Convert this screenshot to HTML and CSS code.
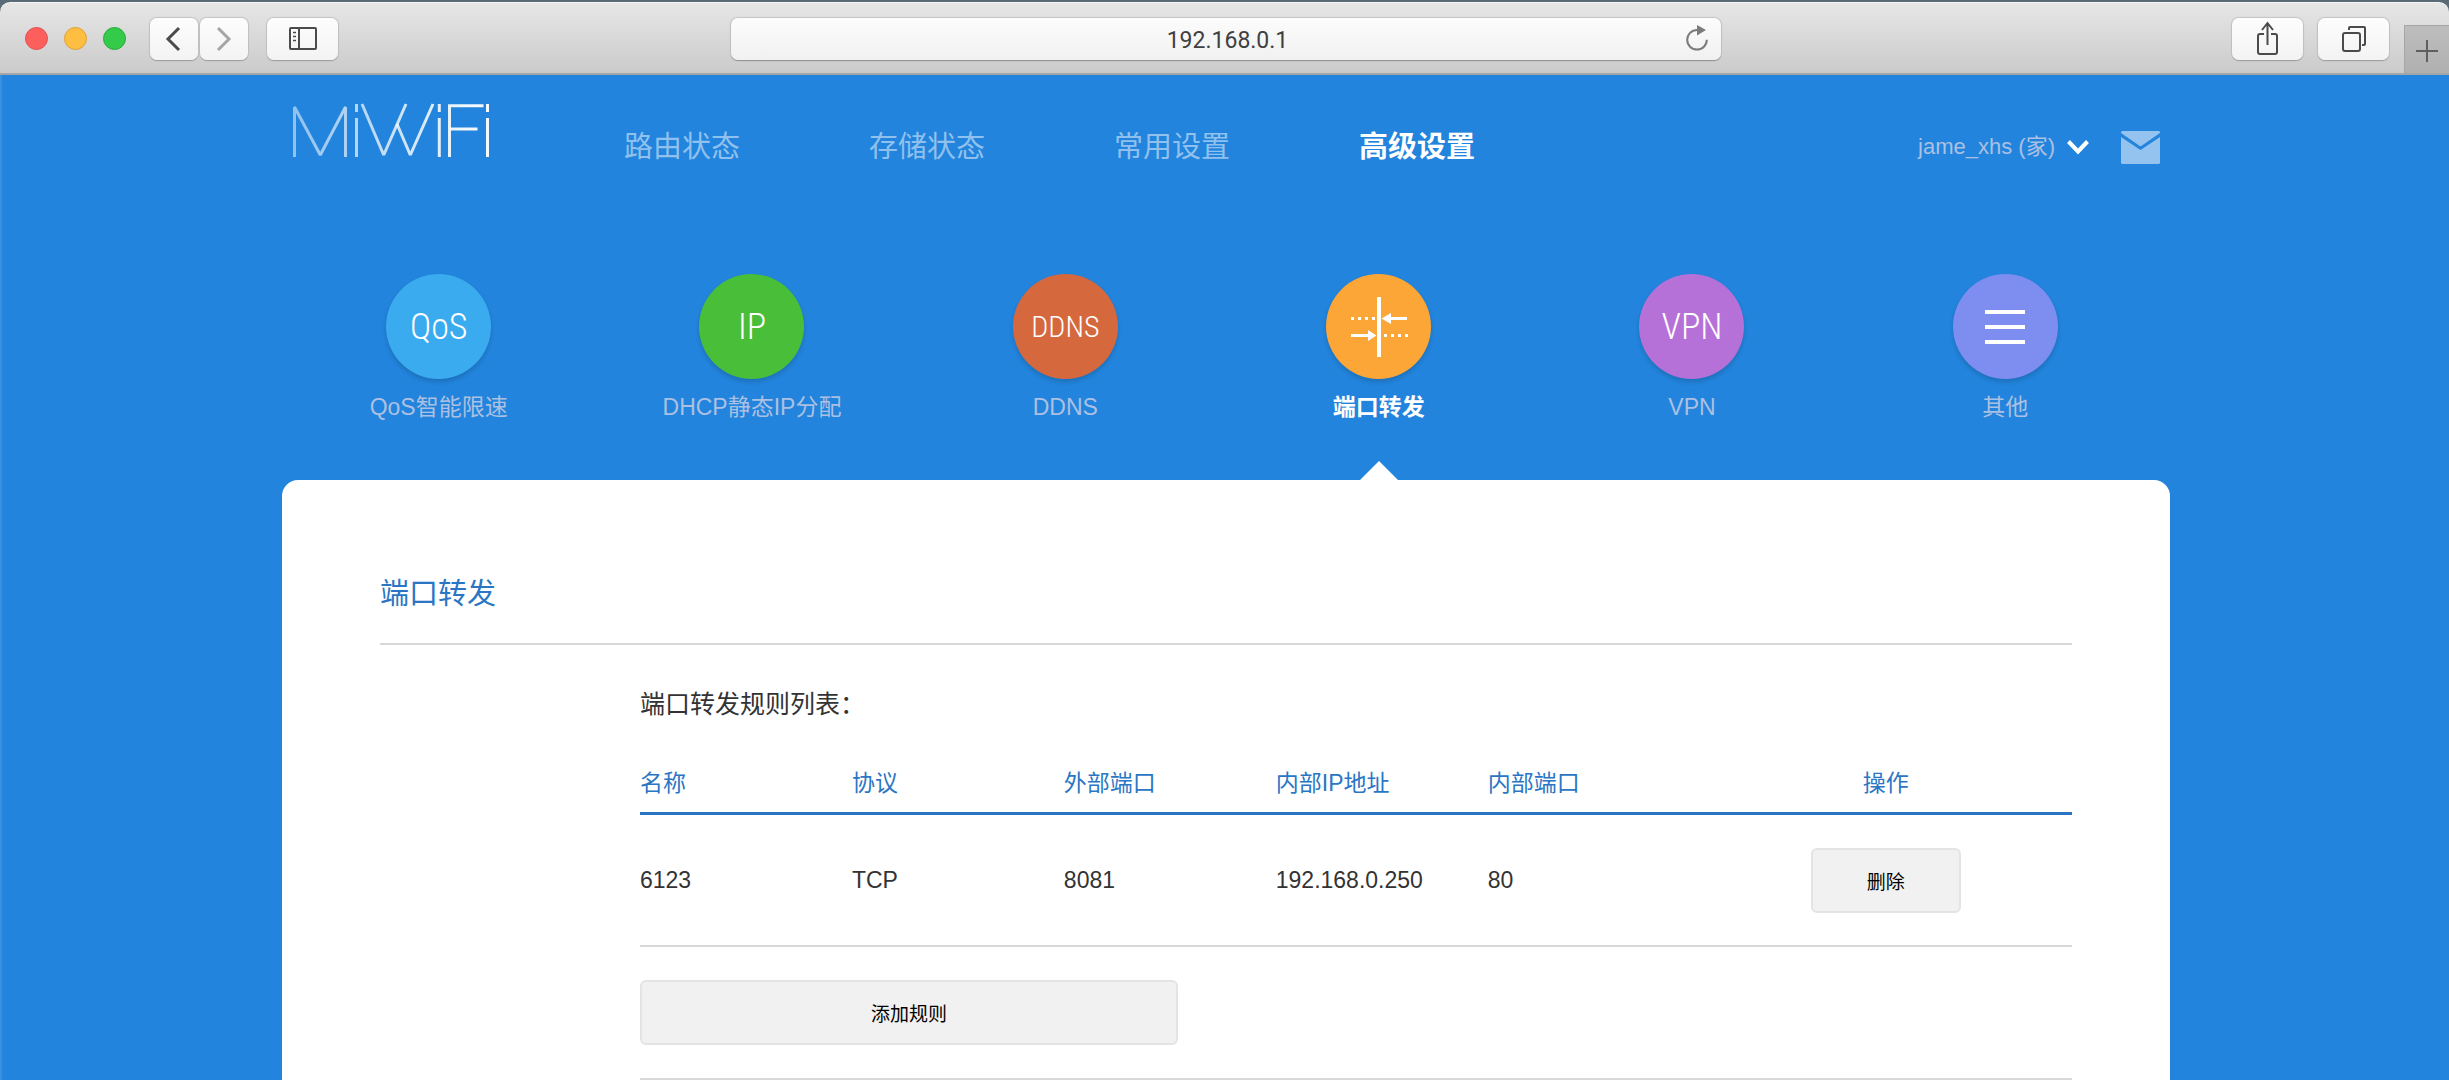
FILE: index.html
```html
<!DOCTYPE html>
<html lang="zh-CN">
<head>
<meta charset="utf-8">
<title>MiWiFi - 端口转发</title>
<link rel="stylesheet" href="styles.css">
</head>
<body>
<div class="desktop">
<div class="toolbar">
  <div class="toolbar-left">
    <div class="lights">
      <span class="light light-red"></span>
      <span class="light light-yellow"></span>
      <span class="light light-green"></span>
    </div>
    <div class="history">
      <button class="tool tool-small" type="button" aria-label="后退">
        <svg width="48" height="42" viewBox="0 0 48 42"><path d="M29 10 18 21l11 11" fill="none" stroke="#4b4b4b" stroke-width="3"/></svg>
      </button>
      <button class="tool tool-small" type="button" aria-label="前进">
        <svg width="48" height="42" viewBox="0 0 48 42"><path d="M18 10l11 11-11 11" fill="none" stroke="#a6a6a6" stroke-width="3"/></svg>
      </button>
    </div>
    <button class="tool" type="button" aria-label="边栏">
      <svg width="28" height="24" viewBox="0 0 28 24"><rect x="1" y="1" width="26" height="21" rx="1" fill="none" stroke="#4b4b4b" stroke-width="2"/><path d="M10 1v21" stroke="#4b4b4b" stroke-width="2"/><path d="M4 5.500h3M4 9.500h3M4 13.500h3" stroke="#4b4b4b" stroke-width="1.500"/></svg>
    </button>
  </div>
  <div class="address">
    <input class="address-input" type="text" value="192.168.0.1" aria-label="地址">
    <button class="reload" type="button" aria-label="重新载入">
      <svg width="24" height="28" viewBox="0 0 24 28"><path d="M12 6A9.800 9.800 0 1 0 21.800 15.800" fill="none" stroke="#7b7b7b" stroke-width="2"/><path d="M12 1l9 5-9 5.500z" fill="#7b7b7b"/></svg>
    </button>
  </div>
  <div class="toolbar-right">
    <button class="tool" type="button" aria-label="共享">
      <svg width="24" height="36" viewBox="0 0 24 36"><path d="M8 13H4a2 2 0 0 0-2 2v16a2 2 0 0 0 2 2h15a2 2 0 0 0 2-2V15a2 2 0 0 0-2-2h-4M11.500 24V2M6 9l5.500-7L17 9" fill="none" stroke="#4b4b4b" stroke-width="2"/></svg>
    </button>
    <button class="tool" type="button" aria-label="标签页概览">
      <svg width="26" height="28" viewBox="0 0 26 28"><rect x="2" y="8" width="17" height="18" rx="2" fill="none" stroke="#4b4b4b" stroke-width="2"/><path d="M8 5V3a1 1 0 0 1 1-1h14a1 1 0 0 1 1 1v16a1 1 0 0 1-1 1h-2" fill="none" stroke="#4b4b4b" stroke-width="2"/></svg>
    </button>
    <button class="new-tab" type="button" aria-label="新标签页">
      <svg width="22" height="22" viewBox="0 0 22 22"><path d="M11 0v22M0 11h22" stroke="#5f5f5f" stroke-width="2"/></svg>
    </button>
  </div>
</div>

<div class="page">
  <div class="container">
    <header class="header">
      <a class="logo" href="#" aria-label="MiWiFi">
        <svg width="200" height="56" viewBox="292 103 200 56" fill="none" stroke="url(#fade)" stroke-width="3">
          <defs>
            <linearGradient id="fade" gradientUnits="userSpaceOnUse" x1="293" y1="0" x2="470" y2="0">
              <stop offset="0" stop-color="#fff" stop-opacity=".5"/>
              <stop offset="1" stop-color="#fff" stop-opacity=".95"/>
            </linearGradient>
          </defs>
          <polyline points="294.500,157 294.500,107 320.300,155 345.500,107 345.500,157" stroke-linejoin="bevel"/>
          <path d="M356.500 104v8M356.500 118v39M439.300 104v8M439.300 118v39M487.500 104v8M487.500 118v39"/>
          <polyline points="362,104 383.700,155 406,104" stroke-linejoin="bevel"/>
          <polyline points="397,124 410.300,155 433,104" stroke-linejoin="bevel"/>
          <polyline points="483.500,105.800 449.500,105.800 449.500,157"/>
          <line x1="450" y1="129" x2="477.500" y2="129"/>
        </svg>
      </a>
      <nav class="main-nav">
        <a href="#">路由状态</a>
        <a href="#">存储状态</a>
        <a href="#">常用设置</a>
        <a class="current" href="#">高级设置</a>
      </nav>
      <div class="account">
        <a class="user" href="#">jame_xhs (家)
          <svg width="22" height="16" viewBox="0 0 22 16"><path d="M1.500 2.500 11 12.500l9.500-10" fill="none" stroke="#fff" stroke-width="4"/></svg>
        </a>
        <a class="mail" href="#" aria-label="消息">
          <svg width="39" height="33" viewBox="0 0 39 33"><path d="M1 0h37l1 1v1L19.500 15.500 0 2V1z" fill="#94c3f0"/><path d="M0 6l19.500 13L39 6v26l-1 1H1l-1-1z" fill="#94c3f0"/></svg>
        </a>
      </div>
    </header>

    <nav class="features">
      <a class="feature" href="#"><span class="disc disc-qos">QoS</span><span>QoS智能限速</span></a>
      <a class="feature" href="#"><span class="disc disc-ip">IP</span><span>DHCP静态IP分配</span></a>
      <a class="feature" href="#"><span class="disc disc-ddns">DDNS</span><span>DDNS</span></a>
      <a class="feature feature-current" href="#"><span class="disc disc-port">
        <svg width="58" height="60" viewBox="0 0 58 60" fill="none" stroke="#fff" stroke-width="3"><path d="M29 0v60" stroke-width="4"/><path d="M1 21.500h24" stroke-dasharray="3 4"/><path d="M34 38.500h24" stroke-dasharray="3 4"/><path d="M39 21.500h18M1 38.500h18"/><path d="M31.500 21.500 41 16v11zM26.500 38.500 18 33v11z" fill="#fff" stroke="none"/></svg>
      </span><span>端口转发</span></a>
      <a class="feature" href="#"><span class="disc disc-vpn">VPN</span><span>VPN</span></a>
      <a class="feature" href="#"><span class="disc disc-more">
        <svg width="40" height="34" viewBox="0 0 40 34"><path d="M0 2h40M0 17h40M0 32h40" stroke="#fff" stroke-width="4"/></svg>
      </span><span>其他</span></a>
    </nav>

    <main class="panel">
      <h1 class="panel-title">端口转发</h1>
      <section class="rules">
        <h2 class="rules-title">端口转发规则列表：</h2>
        <table class="rules-table">
          <thead>
            <tr><th>名称</th><th>协议</th><th>外部端口</th><th>内部IP地址</th><th>内部端口</th><th class="action">操作</th></tr>
          </thead>
          <tbody>
            <tr><td>6123</td><td>TCP</td><td>8081</td><td>192.168.0.250</td><td>80</td><td class="action"><button class="btn btn-delete" type="button">删除</button></td></tr>
          </tbody>
        </table>
        <div class="add-row">
          <button class="btn btn-add" type="button">添加规则</button>
        </div>
      </section>
    </main>
  </div>
</div>
</div>
</body>
</html>
```
FILE: styles.css
```css
* {
  box-sizing: border-box;
}

body {
  margin: 0;
  font-family: "Liberation Sans", "Noto Sans CJK SC", sans-serif;
  font-size: 23px;
  color: #333;
}

a {
  color: inherit;
  text-decoration: none;
}

button,
input {
  font: inherit;
}

svg {
  display: block;
}

.desktop {
  display: flex;
  flex-direction: column;
  min-height: 100vh;
  padding-top: 2px;
  background: #5b6b76;
}

/* Browser toolbar */
.toolbar {
  display: grid;
  grid-template-columns: 1fr minmax(0, 990px) 1fr;
  height: 73px;
  padding-left: 3px;
  border-top: 1px solid #f6f6f6;
  border-bottom: 2px solid #a5a5a5;
  border-radius: 10px 10px 0 0;
  background: linear-gradient(#e6e6e6, #cbcbcb);
}

.toolbar-left,
.toolbar-right {
  display: flex;
  align-items: flex-start;
  padding-top: 15px;
}

.toolbar-left {
  padding-left: 22px;
}

.toolbar-right {
  justify-content: flex-end;
  gap: 15px;
}

.lights {
  display: flex;
  gap: 16px;
  margin: 9px 24px 0 0;
}

.light {
  width: 23px;
  height: 23px;
  border: 1px solid;
  border-radius: 50%;
}

.light-red {
  background: #fd605c;
  border-color: #e5504c;
}

.light-yellow {
  background: #fdbe41;
  border-color: #e0a135;
}

.light-green {
  background: #34cb4b;
  border-color: #27ab38;
}

.history {
  display: flex;
  gap: 2px;
  margin-right: 19px;
}

.tool {
  display: flex;
  align-items: center;
  justify-content: center;
  width: 71px;
  height: 42px;
  padding: 0;
  border: 0;
  border-radius: 7px;
  background: linear-gradient(#fdfdfd, #f3f3f3);
  box-shadow: 0 1px 1px #9c9c9c, 0 0 1px 1px #c4c4c4;
}

.tool-small {
  width: 48px;
}

.address {
  display: flex;
  position: relative;
  height: 42px;
  margin-top: 15px;
}

.address-input {
  width: 100%;
  padding: 2px 38px 0 41px;
  border: 0;
  border-radius: 7px;
  background: linear-gradient(#fcfcfc, #f1f1f1);
  box-shadow: 0 1px 1px #909090, 0 0 1px 1px #c4c4c4;
  color: #404040;
  font-family: Roboto, "Liberation Sans", sans-serif;
  text-align: center;
}

.reload {
  position: absolute;
  right: 12px;
  top: 6px;
  padding: 0;
  border: 0;
  background: none;
}

.new-tab {
  display: flex;
  align-items: center;
  justify-content: center;
  align-self: flex-end;
  width: 45px;
  height: 48px;
  padding: 2px 0 0;
  border: 0;
  border-top: 1px solid #a6a6a6;
  border-left: 1px solid #a6a6a6;
  background: linear-gradient(#bdbdbd, #b0b0b0);
}

/* Router admin page */
.page {
  display: flex;
  flex: 1;
  padding: 0 0 0 1px;
  border-left: 2px solid #3990df;
  background: #2284dc;
}

.container {
  display: flex;
  flex-direction: column;
  width: 100%;
  max-width: 1888px;
  margin: 0 auto;
}

.header {
  display: flex;
  align-items: center;
  height: 140px;
  padding: 0 10px;
}

.logo {
  align-self: flex-start;
  margin: 28px 132px 0 0;
}

.main-nav {
  display: flex;
  gap: 129px;
  padding-top: 4px;
  color: #90c1ee;
  font-size: 29px;
  line-height: 40px;
}

.main-nav .current {
  color: #fff;
  font-weight: bold;
}

.account {
  display: flex;
  align-items: center;
  gap: 32px;
  margin-left: auto;
  padding-top: 4px;
}

.user {
  display: flex;
  align-items: center;
  gap: 12px;
  color: #abc0e3;
  font-size: 22px;
  line-height: 32px;
}

.features {
  display: grid;
  grid-template-columns: repeat(6, 1fr);
  margin-top: 59px;
  padding-right: 8px;
}

.feature {
  display: flex;
  flex-direction: column;
  align-items: center;
  gap: 12px;
  position: relative;
  padding-bottom: 57px;
  color: #abc0e3;
  line-height: 32px;
}

.feature-current {
  color: #fff;
  font-weight: bold;
}

.feature-current::after {
  content: "";
  position: absolute;
  bottom: 0;
  border: solid transparent;
  border-width: 0 19px 19px;
  border-bottom-color: #fff;
}

.disc {
  display: flex;
  align-items: center;
  justify-content: center;
  width: 105px;
  height: 105px;
  border-radius: 50%;
  box-shadow: 0 3px 4px rgba(0, 0, 0, 0.15);
  color: #fff;
  font-family: "Roboto Condensed", "Liberation Sans Narrow", "Liberation Sans", sans-serif;
  font-size: 36px;
  font-weight: 300;
}

.disc-qos { background: #3aabef; }
.disc-ip { background: #49be39; }
.disc-ddns { background: #d6683e; font-size: 30px; }
.disc-port { background: #fda638; }
.disc-vpn { background: #b571d8; }
.disc-more { background: #7d8df0; }

.panel {
  flex: 1;
  padding: 94px 98px 0;
  border-radius: 16px 16px 0 0;
  background: #fff;
}

.panel-title {
  margin: 0;
  padding-bottom: 29px;
  border-bottom: 2px solid #d6d8d9;
  color: #2a76c4;
  font-size: 29px;
  font-weight: normal;
  line-height: 40px;
}

.rules {
  padding: 39px 0 0 260px;
}

.rules-title {
  margin: 0 0 42px;
  font-size: 25px;
  font-weight: normal;
  line-height: 40px;
}

.rules-table {
  width: 100%;
  border-collapse: separate;
  border-spacing: 0;
  table-layout: fixed;
}

.rules-table th,
.rules-table td {
  width: 14.8%;
  padding: 0;
  text-align: left;
}

.rules-table th {
  padding-bottom: 12px;
  border-bottom: 3px solid #2a76c4;
  color: #2a76c4;
  font-weight: normal;
  line-height: 34px;
}

.rules-table td {
  padding: 33px 0 32px;
  border-bottom: 2px solid #d9d9d9;
}

.rules-table .action {
  width: 26%;
  text-align: center;
}

.btn {
  height: 65px;
  padding: 0;
  border: 2px solid #e4e4e4;
  border-radius: 6px;
  background: #f1f1f1;
  color: #000;
  font-size: 19px;
  vertical-align: top;
}

.btn-delete {
  width: 150px;
}

.btn-add {
  width: 538px;
}

.add-row {
  padding: 33px 0;
  border-bottom: 2px solid #d9d9d9;
}
```
